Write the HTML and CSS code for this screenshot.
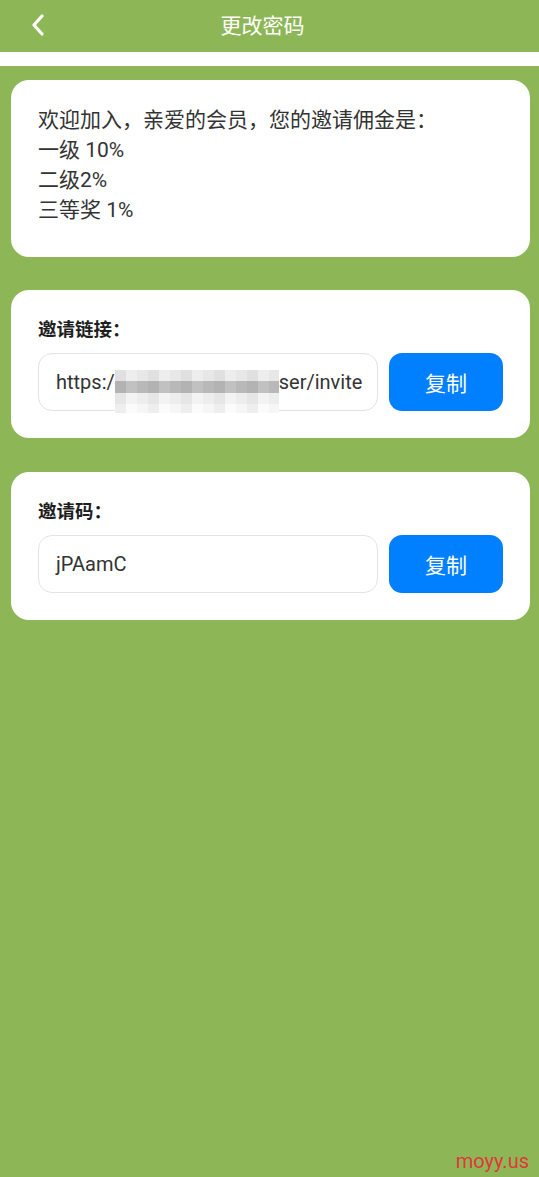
FILE: index.html
```html
<!DOCTYPE html>
<html lang="zh">
<head>
<meta charset="utf-8">
<title>更改密码</title>
<link rel="stylesheet" href="styles.css">
</head>
<body>
<header class="topbar">
  <span class="back">
    <svg width="16" height="22" viewBox="0 0 16 22"><path d="M12 2 L4 11 L12 20" fill="none" stroke="#fff" stroke-width="3.2" stroke-linecap="round" stroke-linejoin="round"/></svg>
  </span>
  <h1 class="title">更改密码</h1>
</header>
<div class="strip"></div>
<main class="content">
  <section class="card intro">
    <p>欢迎加入，亲爱的会员，您的邀请佣金是：</p>
    <p>一级 10%</p>
    <p>二级2%</p>
    <p>三等奖 1%</p>
  </section>
  <section class="card link-card">
    <div class="label">邀请链接：</div>
    <div class="row">
      <div class="field">https:/<span class="mosaic"></span>ser/invite</div>
      <button class="copy">复制</button>
    </div>
  </section>
  <section class="card">
    <div class="label">邀请码：</div>
    <div class="row">
      <div class="field">jPAamC</div>
      <button class="copy">复制</button>
    </div>
  </section>
</main>
<div class="watermark">moyy.us</div>
</body>
</html>
```
FILE: styles.css
```css
* { box-sizing: border-box; }
html, body { margin: 0; padding: 0; }
body {
  background: #8db756;
  font-family: Roboto, "Noto Sans CJK SC", sans-serif;
  color: #333;
  min-height: 1177px;
}
.topbar {
  height: 52px;
  display: flex;
  align-items: center;
  justify-content: center;
  padding-right: 14px;
  position: relative;
}
.back {
  position: absolute;
  left: 30px;
  top: 14px;
  display: flex;
}
.title {
  margin: 0;
  font-size: 21px;
  font-weight: 400;
  color: #fff;
  line-height: 52px;
}
.strip {
  height: 14px;
  background: #fff;
}
.content {
  padding: 14px 9px 0 11px;
  display: flex;
  flex-direction: column;
  gap: 33px;
}
.card {
  background: #fff;
  border-radius: 18px;
  padding: 28px 27px 27px 27px;
}
.link-card {
  margin-bottom: 1px;
}
.intro {
  padding: 25px 27px 32px;
}
.intro p {
  margin: 0;
  font-size: 21px;
  line-height: 30px;
  color: #333;
}
.label {
  font-size: 18.5px;
  font-weight: 700;
  line-height: 24px;
  color: #1e1e1e;
  margin-bottom: 11px;
}
.row {
  display: flex;
  gap: 11px;
}
.field {
  width: 340px;
  height: 58px;
  border: 1px solid #e3e3e3;
  border-radius: 14px;
  padding-left: 17px;
  font-size: 20px;
  line-height: 56px;
  color: #333;
  white-space: nowrap;
  overflow: visible;
}
.mosaic {
  display: inline-block;
  width: 164px;
  height: 43px;
  vertical-align: -24px;
  background:
    repeating-linear-gradient(90deg, rgba(0,0,0,0.05) 0 11px, rgba(255,255,255,0.08) 11px 22px, rgba(0,0,0,0.02) 22px 33px),
    linear-gradient(180deg, #ececec 0 11px, #bcbcbc 11px 23px, #f2f2f2 23px 34px, #fbfbfb 34px 43px);
}
.copy {
  width: 114px;
  height: 58px;
  border: 0;
  border-radius: 13px;
  background: #0080ff;
  color: #fff;
  font-family: Roboto, "Noto Sans CJK SC", sans-serif;
  font-size: 21px;
  padding: 0;
}
.watermark {
  position: absolute;
  top: 1149px;
  right: 10px;
  color: #e0383a;
  font-size: 20px;
  font-family: Roboto, "Noto Sans CJK SC", sans-serif;
}
```
